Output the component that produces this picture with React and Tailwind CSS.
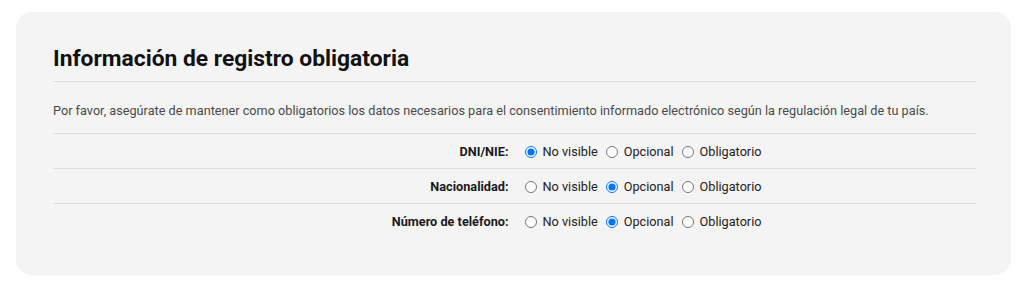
import React from "react";

const fields = [
  { name: "dni", label: "DNI/NIE:", value: "hidden" },
  { name: "nationality", label: "Nacionalidad:", value: "optional" },
  { name: "phone", label: "Número de teléfono:", value: "optional" },
];

const options = [
  { value: "hidden", label: "No visible" },
  { value: "optional", label: "Opcional" },
  { value: "required", label: "Obligatorio" },
];

export default function App() {
  return (
    <div
      className="min-h-screen bg-white pt-[12px] pl-[16px] pr-[13px] pb-[15px]"
      style={{ fontFamily: "Roboto, 'Liberation Sans', sans-serif" }}
    >
      <div className="bg-[#f4f4f4] rounded-[16px] pt-[34px] pl-[37px] pr-[35px] pb-[37px]">
        <h2 className="text-[22.8px] leading-[26px] font-bold text-[#111] pb-[9px] border-b border-[#dedede]">
          Información de registro obligatoria
        </h2>
        <p className="text-[12.7px] leading-[15px] text-[#4a4a4a] mt-[21px] mb-[15px]">
          Por favor, asegúrate de mantener como obligatorios los datos necesarios para el consentimiento informado electrónico según la regulación legal de tu país.
        </p>
        <div>
          {fields.map((field, i) => (
            <div
              key={field.name}
              className={
                "grid grid-cols-2 items-center h-[35px] pt-[2px] text-[12.7px] " +
                (i < fields.length - 1 ? "border-t border-[#dedede]" : "border-y border-t-[#dedede] border-b-transparent")
              }
            >
              <div className="text-right pr-[6px] font-bold text-[#1a1a1a]">{field.label}</div>
              <div className="flex items-center pl-[10px] text-[#222]">
                {options.map((opt) => (
                  <label key={opt.value} className="flex items-center mr-[8px]">
                    <input
                      type="radio"
                      name={field.name}
                      defaultChecked={field.value === opt.value}
                      className="w-[12px] h-[12px] m-0 mt-[1px] mr-[6px] accent-[#0075ff]"
                    />
                    <span>{opt.label}</span>
                  </label>
                ))}
              </div>
            </div>
          ))}
        </div>
      </div>
    </div>
  );
}
